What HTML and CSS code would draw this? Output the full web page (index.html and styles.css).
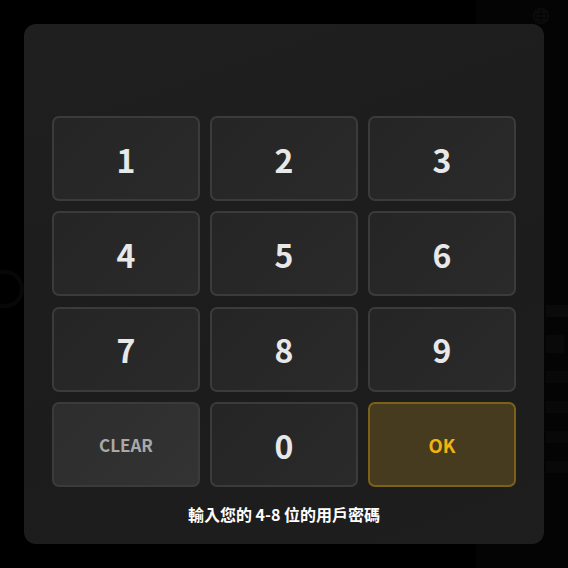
FILE: index.html
```html
<!DOCTYPE html>
<html lang="zh-Hant">
<head>
<meta charset="utf-8">
<link rel="stylesheet" href="styles.css">
</head>
<body>
<div class="screen">
  <div class="backdrop">
    <div class="bg-left"><span class="bg-ring"></span></div>
    <div class="bg-side">
      <svg class="bg-globe" width="18" height="18" viewBox="0 0 18 18" fill="none" stroke="#0c0c0c" stroke-width="1.6">
        <circle cx="9" cy="9" r="7.5"/>
        <ellipse cx="9" cy="9" rx="3.2" ry="7.5"/>
        <path d="M1.5 9h15M3 5h12M3 13h12"/>
      </svg>
      <div class="bg-lines">
        <span class="bg-bar bg-bar-num"></span>
        <span class="bg-icon"></span>
        <span class="bg-bar"></span>
        <span class="bg-bar"></span>
        <span class="bg-bar"></span>
        <span class="bg-bar"></span>
      </div>
    </div>
  </div>
  <div class="panel">
    <div class="keypad">
      <button class="key">1</button>
      <button class="key">2</button>
      <button class="key">3</button>
      <button class="key">4</button>
      <button class="key">5</button>
      <button class="key">6</button>
      <button class="key">7</button>
      <button class="key">8</button>
      <button class="key">9</button>
      <button class="key key-clear">CLEAR</button>
      <button class="key">0</button>
      <button class="key key-ok">OK</button>
    </div>
    <p class="hint">輸入您的 4-8 位的用戶密碼</p>
  </div>
</div>
</body>
</html>
```
FILE: styles.css
```css
html, body {
  margin: 0;
  padding: 0;
  background: #000;
}
.screen {
  position: relative;
  width: 568px;
  height: 568px;
  overflow: hidden;
  font-family: "Noto Sans CJK TC", "Noto Sans", sans-serif;
}
.backdrop {
  display: flex;
  justify-content: space-between;
  height: 100%;
}
.bg-left {
  display: flex;
  align-items: center;
  padding-top: 10px;
}
.bg-ring {
  width: 30px;
  height: 30px;
  border: 4px solid #070707;
  border-radius: 50%;
  margin-left: -14px;
}
.bg-side {
  width: 92px;
  background: #040404;
  display: flex;
  flex-direction: column;
  align-items: flex-end;
  padding: 7px 18px 0 0;
  box-sizing: border-box;
}
.bg-lines {
  align-self: flex-start;
  margin: 280px 0 0 70px;
  display: flex;
  flex-direction: column;
  gap: 18px;
}
.bg-bar {
  width: 22px;
  height: 12px;
  background: #080808;
}
.bg-bar-num {
  background: #0a0a0a;
}
.bg-icon {
  width: 18px;
  height: 18px;
  background: #090909;
}
.panel {
  position: absolute;
  left: 24px;
  top: 24px;
  width: 520px;
  height: 520px;
  box-sizing: border-box;
  padding: 92px 28px 0 28px;
  border-radius: 12px;
  background: linear-gradient(160deg, #1f1f20 0%, #1c1c1d 60%, #1e1e1f 100%);
}
.keypad {
  display: grid;
  grid-template-columns: repeat(3, 148px);
  grid-auto-rows: 85px;
  column-gap: 10px;
  row-gap: 10.4px;
}
.key {
  margin: 0;
  padding: 0;
  border: 2px solid #3b3b3c;
  border-radius: 7px;
  background: linear-gradient(135deg, #252526 0%, #2a2a2b 100%);
  color: #e8e8e8;
  font-family: "Noto Sans CJK TC", "Noto Sans", sans-serif;
  font-size: 32px;
  font-weight: 700;
  display: flex;
  align-items: center;
  justify-content: center;
}
.key-clear {
  background: linear-gradient(135deg, #2d2d2e 0%, #333334 100%);
  color: #a9a9a9;
  font-size: 17px;
}
.key-ok {
  background: #463b1e;
  border-color: #7b6218;
  color: #f2b311;
  font-size: 18.5px;
}
.hint {
  margin: 16px 0 0 0;
  text-align: center;
  color: #ffffff;
  font-size: 16px;
  line-height: 22px;
  font-weight: 700;
}
```
